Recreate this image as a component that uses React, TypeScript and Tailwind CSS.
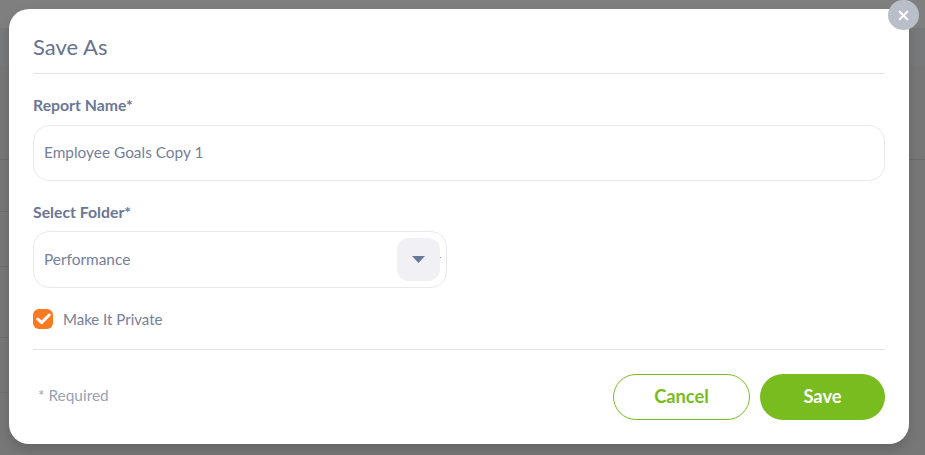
import { useState } from 'react';
import { X } from 'lucide-react';

const font = { fontFamily: 'Lato, "Open Sans", sans-serif' };

export default function App() {
  const [isPrivate, setIsPrivate] = useState(true);

  return (
    <div style={font} className="relative h-[455px] w-[925px] overflow-hidden bg-[#777777]">
      {/* faint page rows behind the backdrop */}
      <div className="absolute inset-x-0 top-0 h-[28px] bg-[#7f7f7f]" />
      <div className="absolute inset-x-0 top-[28px] h-[37px] bg-[#77797a]" />
      <div className="absolute inset-x-0 top-[159px] h-px bg-[#6a6a6a]" />
      <div className="absolute left-0 top-[211px] h-px w-[9px] bg-[#6e6e6e]" />
      <div className="absolute left-0 top-[266px] h-px w-[9px] bg-[#6e6e6e]" />
      <div className="absolute left-0 top-[337px] h-px w-[9px] bg-[#6e6e6e]" />
      <div className="absolute left-0 top-[392px] h-px w-[9px] bg-[#6e6e6e]" />

      <div className="absolute left-[9px] top-[9px] flex h-[435px] w-[900px] flex-col rounded-[20px] bg-white px-6 shadow-[0_6px_12px_rgba(0,0,0,0.15)]">
        <h2 className="flex h-[65px] items-center border-b border-[#e2e2e6] pt-[11px] text-[22px] leading-none text-[#66728f]">
          Save As
        </h2>

        <label className="mt-[21px] text-[15.8px] font-bold leading-[20px] text-[#6b7794]">Report Name*</label>
        <div className="mt-[10px] flex h-[56px] items-center rounded-[16px] border border-[#e9e9f0] px-[10px] text-[15.4px] text-[#75809a]">
          Employee Goals Copy 1
        </div>

        <label className="mt-[21px] text-[15.8px] font-bold leading-[20px] text-[#6b7794]">Select Folder*</label>
        <div className="relative mt-[9px] flex h-[57px] w-[414px] items-center justify-between rounded-[16px] border border-[#e9e9f0] pl-[10px] pr-[6px] text-[15.4px] text-[#75809a]">
          <span>Performance</span>
          <span className="flex h-[43px] w-[43px] items-center justify-center rounded-[12px] bg-[#f0f0f5]">
            <svg width="13" height="7" viewBox="0 0 13 7">
              <path d="M0 0h13L6.5 7z" fill="#667a99" />
            </svg>
          </span>
          <span className="absolute left-[406px] top-[25px] h-px w-px bg-[#8e9ab0]" />
        </div>

        <label className="mt-[21px] flex items-center gap-[10px] text-[15px] leading-[20px] text-[#75809a]">
          <input
            type="checkbox"
            className="sr-only"
            checked={isPrivate}
            onChange={() => setIsPrivate(!isPrivate)}
          />
          <span className="flex h-5 w-5 items-center justify-center rounded-[6px] bg-[#fb7a21]">
            <svg width="15" height="12" viewBox="0 0 15 12" fill="none">
              <path d="M1.8 6 5.6 9.6 13.2 2" stroke="white" strokeWidth="3" strokeLinecap="round" strokeLinejoin="round" />
            </svg>
          </span>
          Make It Private
        </label>

        <div className="mt-5 h-px bg-[#e2e2e6]" />

        <div className="mt-6 flex items-center justify-between">
          <span className="pb-[2px] pl-[5px] text-[15.4px] text-[#9aa2b5]">* Required</span>
          <div className="flex gap-[10px]">
            <button className="h-[46px] w-[137px] rounded-full border border-[#78bc20] bg-white text-[18.3px] font-bold text-[#78bc20]">
              Cancel
            </button>
            <button className="h-[46px] w-[125px] rounded-full bg-[#78bc20] text-[18.3px] font-bold text-white">
              Save
            </button>
          </div>
        </div>
      </div>

      <button className="absolute left-[888px] top-0 flex h-[30px] w-[31px] items-center justify-center rounded-full bg-[#b9bec9] text-white">
        <X size={15} strokeWidth={3.4} />
      </button>
    </div>
  );
}
